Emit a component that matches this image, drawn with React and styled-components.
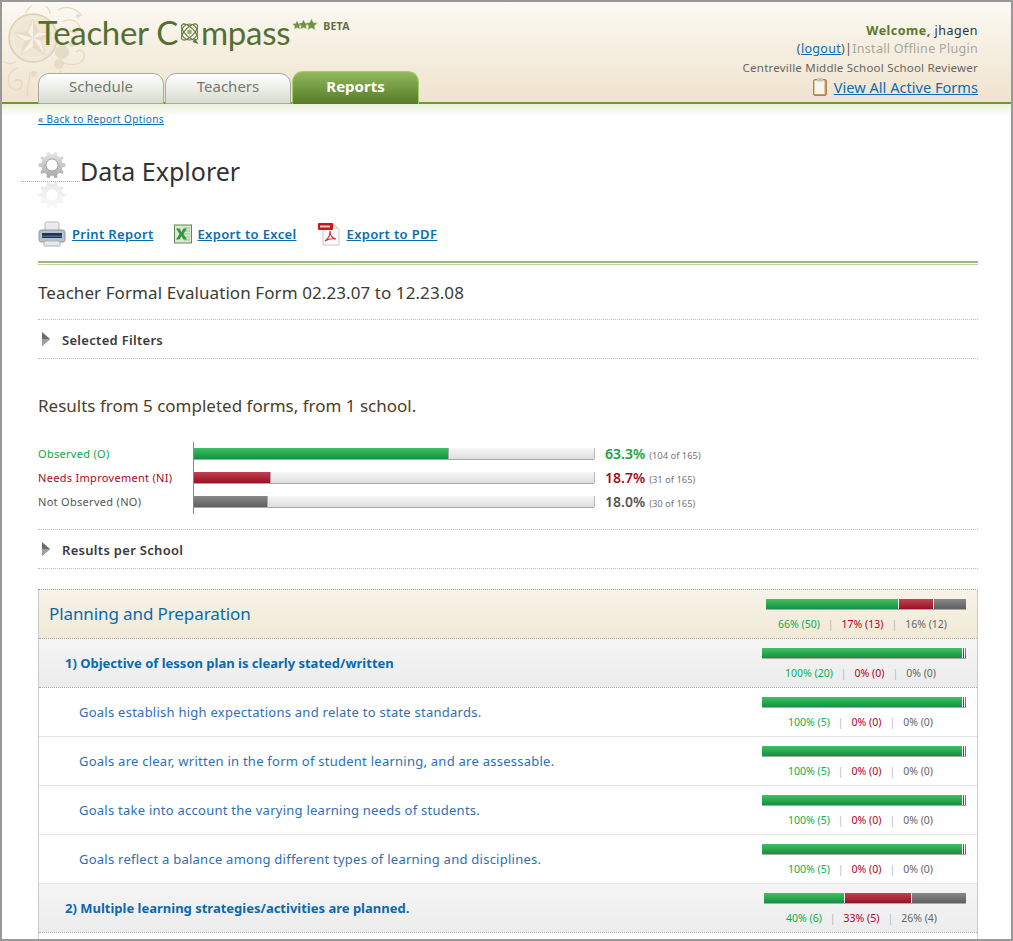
import React from 'react';
import styled, { createGlobalStyle } from 'styled-components';

const BODY_FONT = '"Noto Sans", "Open Sans", sans-serif';

const gearPath = (cx, cy, outer, inner, teeth) => {
  const pts = [];
  const step = (Math.PI * 2) / teeth;
  for (let i = 0; i < teeth; i++) {
    const a = i * step;
    [[-0.3, inner], [-0.17, outer], [0.17, outer], [0.3, inner]].forEach(([o, r]) => {
      const t = a + o * step;
      pts.push(`${(cx + r * Math.cos(t)).toFixed(2)} ${(cy + r * Math.sin(t)).toFixed(2)}`);
    });
  }
  return `M${pts.join('L')}Z`;
};

const Gear = ({ faded }) => (
  <svg width="30" height="30" viewBox="0 0 30 30" style={faded ? { transform: 'scaleY(-1)' } : undefined}>
    <defs>
      <linearGradient id={faded ? 'gf' : 'gs'} x1="0" y1="0" x2="0" y2="1">
        <stop offset="0" stopColor={faded ? '#fafafa' : '#e6e6e6'} />
        <stop offset="1" stopColor={faded ? '#e8e8e8' : '#a8a8a8'} />
      </linearGradient>
    </defs>
    <path d={gearPath(15, 15, 14.5, 11.5, 10)} fill={`url(#${faded ? 'gf' : 'gs'})`} />
    <circle cx="15" cy="15" r="6.5" fill="#fff" stroke={faded ? '#f2f2f2' : '#9a9a9a'} strokeWidth="1" />
  </svg>
);

const Star = ({ size }) => (
  <svg width={size} height={size} viewBox="0 0 20 20">
    <path d="M10 .8l2.800 6 6.600.8-4.800 4.500 1.200 6.500L10 15.400l-5.800 3.200 1.200-6.500L.6 7.600l6.600-.8z" fill="#6f9440" stroke="#e9efdc" strokeWidth=".8" />
  </svg>
);

const Emblem = () => (
  <svg width="100" height="100" viewBox="0 0 100 100">
    <g fill="none" stroke="#e4d9c1" strokeWidth="1.3">
      <path d="M56 8c10-6 20 0 24 6M60 20c8-4 16-2 18 6-2 6-8 6-10 2" />
      <path d="M60 60c8 4 18 4 22-4 2-6-4-10-8-6M58 68c2 8 0 18-10 22-8 2-14-4-10-10 4-4 8 0 6 4" />
      <path d="M16 66c-8 2-12 10-8 18 4 6 12 4 12-2 0-4-6-6-8-2M28 70c0 8-4 16-2 24" />
      <path d="M44 4c2 2 4 4 4 8M30 4c-4 2-6 6-6 8M2 60c4 2 8 2 12 0" />
    </g>
    <g fill="#e6dbc4">
      <circle cx="60" cy="50" r="7" />
      <circle cx="57" cy="62" r="5" />
      <circle cx="70" cy="42" r="3" />
      <circle cx="76" cy="14" r="2" />
      <circle cx="32" cy="72" r="3" />
    </g>
    <circle cx="31" cy="36" r="24" fill="#efe6d4" stroke="#dfd0b5" strokeWidth="1.5" />
    <circle cx="31" cy="36" r="20" fill="none" stroke="#f7f1e5" strokeWidth="1" />
    <path d="M31 17l5 13 14 1-11 8 4 14-12-8-12 8 4-14-11-8 14-1z" fill="#f8f3e8" stroke="#dfd0b5" strokeWidth=".6" />
    <path d="M31 17l5 13-5 6zM50 31l-11 8-8-3zM43 53l-12-8v-9zM19 53l4-14 8-3zM12 31l14-1 5 6z" fill="#e8dcc6" />
  </svg>
);

const CompassO = () => (
  <svg width="23" height="27" viewBox="0 0 23 27">
    <g fill="none" stroke="#5f7a3a" strokeWidth="1.1">
      <circle cx="11.5" cy="13" r="8" />
      <ellipse cx="11.5" cy="13" rx="10.5" ry="4.4" transform="rotate(45 11.5 13)" />
      <ellipse cx="11.5" cy="13" rx="10.5" ry="4.4" transform="rotate(-45 11.5 13)" />
    </g>
    <circle cx="11.5" cy="13" r="2.4" fill="#9aa888" />
    <path d="M17 19.500l3.500 5.500-6-2z" fill="#5f7a3a" />
  </svg>
);

const Clipboard = () => (
  <svg width="14" height="18" viewBox="0 0 14 18">
    <rect x=".5" y="1.500" width="13" height="16" rx="1.500" fill="#c79a5c" stroke="#a98450" />
    <rect x="1.500" y="2.500" width="10" height="13.500" fill="#f7f5ee" />
    <rect x="4" y="0" width="6" height="3.500" rx="1" fill="#c4c4bc" />
  </svg>
);

const PrinterIcon = () => (
  <svg width="28" height="26" viewBox="0 0 28 26">
    <rect x="7" y="1" width="14" height="10" rx="1.500" fill="#e8ecef" stroke="#b4bac0" />
    <rect x="1" y="9" width="26" height="12" rx="2.500" fill="#b9c0c7" stroke="#8f979f" />
    <rect x="4" y="12" width="20" height="5" fill="#1e3553" />
    <rect x="4" y="14.500" width="20" height="1.500" fill="#45688f" />
    <rect x="6" y="20" width="16" height="5" rx="1" fill="#e6e9ec" stroke="#a9b0b7" />
  </svg>
);

const ExcelIcon = () => (
  <svg width="18" height="20" viewBox="0 0 18 20">
    <rect x=".5" y="1" width="17" height="18" fill="#dce8d0" stroke="#5f8a58" />
    <path d="M10 4h6M10 7h6M10 10h6M10 13h6M10 16h6" stroke="#a9c09c" strokeWidth="1" />
    <path d="M2 4.500h3.600l1.900 3.400 1.900-3.400H13l-3.600 5.500 3.600 5.500H9.400l-1.900-3.400-1.900 3.400H2L5.600 10z" fill="#2c9a3e" />
  </svg>
);

const PdfIcon = () => (
  <svg width="24" height="24" viewBox="-1 0 24 24">
    <path d="M5 2h11l5 5v16H5z" fill="#fafafa" stroke="#c9c9c9" />
    <path d="M16 2v5h5z" fill="#dcdcdc" />
    <rect x="0" y="1" width="15" height="7" rx="1" fill="#c8161c" />
    <rect x="2" y="3.500" width="10" height="2" fill="#f3c6c6" />
    <path d="M7 19c3-2 5-6 5-10 0 4 2 7 6 8-4-.5-8 0-11 2z" fill="none" stroke="#d4262c" strokeWidth="1.100" />
  </svg>
);

const Arrow = () => (
  <svg width="10" height="16" viewBox="0 0 10 16">
    <path d="M1 1l8 7-8 7z" fill="#6b6b6b" />
    <path d="M1 8l8 0-8 7z" fill="#a0a0a0" />
  </svg>
);

const GlobalStyle = createGlobalStyle`
  html, body { margin: 0; padding: 0; background: #fff; }
  body { font-family: ${BODY_FONT}; }
  a { color: #0a6db3; }
`;

const Frame = styled.div`
  box-sizing: border-box;
  width: 1013px;
  height: 941px;
  overflow: hidden;
  border: 2px solid #999;
  background: #fff;
`;

const Header = styled.header`
  position: relative;
  box-sizing: border-box;
  height: 102px;
  display: flex;
  justify-content: space-between;
  padding: 0 33px 0 36px;
  background: linear-gradient(#fbf9f3, #efe3cd);
  border-bottom: 2px solid #6c9a2e;
`;

const EmblemWrap = styled.div`
  position: absolute;
  left: 0;
  top: 0;
  height: 100px;
`;

const Brand = styled.div`
  position: relative;
  display: flex;
  flex-direction: column;
  justify-content: space-between;
`;

const LogoRow = styled.div`
  display: flex;
  align-items: flex-start;
  padding-top: 10px;
`;

const LogoText = styled.div`
  display: flex;
  align-items: center;
  font-family: Lato, ${BODY_FONT};
  font-weight: 400;
  font-size: 33px;
  line-height: 40px;
  letter-spacing: -.3px;
  color: #556f31;
  white-space: nowrap;
`;

const StarRow = styled.div`
  display: flex;
  align-items: center;
  margin: 6px 0 0 2px;
  > * + * { margin-left: -4px; }
`;

const Beta = styled.span`
  margin: 7px 0 0 5px;
  font-size: 10.5px;
  font-weight: 700;
  letter-spacing: .3px;
  color: #636c45;
`;

const Tabs = styled.nav`
  display: flex;
  gap: 1px;
  align-items: flex-end;
  margin-bottom: -2px;
`;

const Tab = styled.a`
  box-sizing: border-box;
  width: ${p => (p.$active ? 127 : 126)}px;
  height: ${p => (p.$active ? 33 : 31)}px;
  display: flex;
  align-items: center;
  justify-content: center;
  padding-bottom: ${p => (p.$active ? 4 : 6)}px;
  border: 1px solid ${p => (p.$active ? '#a5cf63' : '#a9a9a4')};
  border-bottom-width: ${p => (p.$active ? 0 : 1)}px;
  border-radius: 11px 11px 0 0;
  background: ${p => (p.$active ? 'linear-gradient(#92b95b, #567a29)' : 'linear-gradient(#fff, #d6dccf)')};
  color: ${p => (p.$active ? '#fff' : '#77776f')};
  font-size: 15px;
  font-weight: ${p => (p.$active ? 700 : 400)};
`;

const Account = styled.div`
  display: flex;
  flex-direction: column;
  align-items: flex-end;
  padding-top: 20px;
  font-size: 12.5px;
  line-height: 18px;
  color: #666;
`;

const Welcome = styled.div`
  color: #333;
  letter-spacing: .5px;
  b { color: #607529; }
`;

const LogoutLine = styled.div`
  color: #a9a69e;
  letter-spacing: .3px;
  a { color: #0a6db3; }
  span { color: #555; }
`;

const SchoolLine = styled.div`
  font-size: 11.5px;
  line-height: 19px;
  letter-spacing: .22px;
`;

const FormsLink = styled.div`
  display: flex;
  align-items: center;
  gap: 7px;
  font-size: 14.6px;
  line-height: 20px;
`;

const Main = styled.main`
  padding: 0 33px 0 36px;
  background: linear-gradient(#e9f2dc, #fff) no-repeat 0 0 / 100% 13px;
`;

const BackLink = styled.a`
  display: block;
  padding-top: 8px;
  font-size: 10px;
  line-height: 14px;
  letter-spacing: .4px;
  color: #0a6db3;
  text-decoration: underline;
`;

const TitleRow = styled.div`
  position: relative;
  display: flex;
  gap: 15px;
  margin-top: 25px;
  height: 58px;
  &::before {
    content: '';
    position: absolute;
    left: -17px;
    top: 30px;
    width: 59px;
    border-top: 1px dotted #aaa;
  }
`;

const GearColumn = styled.div`
  display: flex;
  flex-direction: column;
  gap: 2px;
  width: 28px;
  margin-left: -1px;
`;

const Title = styled.h1`
  margin: 0;
  padding-top: 2px;
  font-size: 25px;
  line-height: 36px;
  font-weight: 400;
  color: #333;
`;

const Tools = styled.div`
  display: flex;
  align-items: center;
  gap: 20px;
  margin-top: 10px;
  height: 30px;
`;

const Tool = styled.a`
  display: flex;
  align-items: center;
  gap: 6px;
  font-size: 13px;
  font-weight: 600;
  letter-spacing: .35px;
  span { color: #0a6db3; text-decoration: underline; }
`;

const Rule = styled.div`
  margin-top: 12px;
  height: 1px;
  border-top: 2px solid #9db873;
  border-bottom: 1px solid #c3d2a8;
`;

const FormTitle = styled.h2`
  margin: 16px 0 0;
  font-size: 17px;
  line-height: 24px;
  font-weight: 400;
  letter-spacing: .08px;
  color: #3b3b33;
`;

const Toggle = styled.div`
  display: flex;
  align-items: center;
  gap: 11px;
  box-sizing: border-box;
  height: 40px;
  padding: 2px 0 0 3px;
  border-top: 1px dotted #bbb;
  border-bottom: 1px dotted #bbb;
  font-size: 13px;
  font-weight: 600;
  letter-spacing: .3px;
  color: #3a3a3a;
  svg { margin-top: -2px; }
`;

const FiltersToggle = styled(Toggle)`
  margin-top: 14px;
`;

const ResultsHeading = styled.h3`
  margin: 35px 0 0;
  font-size: 17px;
  line-height: 24px;
  font-weight: 400;
  color: #4a4028;
`;

const Chart = styled.div`
  display: grid;
  grid-template-columns: 155px 401px auto;
  margin-top: 24px;
  height: 72px;
  align-content: center;
`;

const ChartLabel = styled.div`
  height: 24px;
  line-height: 24px;
  font-size: 11px;
  letter-spacing: .3px;
  color: ${p => p.$color};
`;

const ChartTrack = styled.div`
  box-sizing: border-box;
  display: flex;
  align-items: center;
  height: 24px;
  padding-bottom: 2px;
  border-left: 1px solid #888;
`;

const Track = styled.div`
  width: 400px;
  height: 11px;
  display: flex;
  background: linear-gradient(#f6f6f6, #dedede);
  box-shadow: 0 1px 0 #a8a8a8, 1px 0 0 #bbb;
`;

const Fill = styled.div`
  width: ${p => p.$w}px;
  background: ${p => p.$bg};
  border-right: 1px solid #aaa;
`;

const ChartValue = styled.div`
  display: flex;
  align-items: baseline;
  gap: 4px;
  height: 24px;
  line-height: 24px;
  padding-left: 11px;
  font-size: 14px;
  font-weight: 600;
  color: ${p => p.$color};
  small {
    font-size: 9.4px;
    font-weight: 400;
    color: #777;
  }
`;

const ResultsToggle = styled(Toggle)`
  margin-top: 15px;
`;

const Table = styled.section`
  margin-top: 20px;
  padding-bottom: 20px;
  border-top: 1px dotted #999;
  border-left: 1px solid #ccc;
  border-right: 1px solid #ccc;
`;

const Row = styled.div`
  box-sizing: border-box;
  display: flex;
  align-items: center;
  justify-content: space-between;
  height: 49px;
  padding-right: 11px;
  padding-left: ${p => ({ section: 10, question: 26, goal: 40 }[p.$kind])}px;
  border-bottom: 1px ${p => (p.$kind === 'goal' ? 'solid #e4e4e4' : 'dotted #aaa')};
  background: ${p => ({
    section: 'linear-gradient(#f7f3e8, #f1e9d6)',
    question: 'linear-gradient(#f5f5f5, #ececec)',
    goal: '#fff',
  }[p.$kind])};
`;

const RowLabel = styled.div`
  padding-bottom: 1px;
  color: ${p => (p.$kind === 'goal' ? '#2d70b6' : '#0b69ab')};
  font-size: ${p => (p.$kind === 'section' ? 17 : 13)}px;
  font-weight: ${p => (p.$kind === 'question' ? 700 : 400)};
  letter-spacing: ${p => ({ section: -0.1, question: 0, goal: 0.25 }[p.$kind])}px;
`;

const Stat = styled.div`
  display: flex;
  flex-direction: column;
  align-items: flex-end;
  padding-top: 2px;
`;

const StatBar = styled.div`
  display: flex;
  gap: 1px;
  height: 10px;
  box-shadow: 0 1px 0 #aaa;
`;

const Seg = styled.div`
  width: ${p => p.$w}px;
  background: ${p => p.$bg};
`;

const StatText = styled.div`
  align-self: center;
  display: flex;
  gap: 8px;
  margin: 8px 7px 0 0;
  font-size: 10.5px;
  line-height: 14px;
  i { font-style: normal; color: #b9b9b9; }
`;

const Pct = styled.span`
  color: ${p => p.$color};
`;

const GREEN = 'linear-gradient(#3dc264, #178f40)';
const RED = 'linear-gradient(#c7404f, #931324)';
const GREY = 'linear-gradient(#888, #5f5f5f)';

const chartRows = [
  { label: 'Observed (O)', color: '#0aa83f', w: 254, bg: GREEN, pct: '63.3%', of: '(104 of 165)' },
  { label: 'Needs Improvement (NI)', color: '#a80a26', w: 76, bg: RED, pct: '18.7%', of: '(31 of 165)' },
  { label: 'Not Observed (NO)', color: '#555', w: 73, bg: GREY, pct: '18.0%', of: '(30 of 165)' },
];

const full = [200, 1, 1];
const fullText = n => [`100% (${n})`, '0% (0)', '0% (0)'];

const rows = [
  { kind: 'section', label: 'Planning and Preparation', segs: [132, 34, 32], text: ['66% (50)', '17% (13)', '16% (12)'] },
  { kind: 'question', label: '1) Objective of lesson plan is clearly stated/written', segs: full, text: fullText(20) },
  { kind: 'goal', label: 'Goals establish high expectations and relate to state standards.', segs: full, text: fullText(5) },
  { kind: 'goal', label: 'Goals are clear, written in the form of student learning, and are assessable.', segs: full, text: fullText(5) },
  { kind: 'goal', label: 'Goals take into account the varying learning needs of students.', segs: full, text: fullText(5) },
  { kind: 'goal', label: 'Goals reflect a balance among different types of learning and disciplines.', segs: full, text: fullText(5) },
  { kind: 'question', label: '2) Multiple learning strategies/activities are planned.', segs: [80, 66, 54], text: ['40% (6)', '33% (5)', '26% (4)'] },
];

const segColors = [GREEN, RED, GREY];
const textColors = ['#0aaf4c', '#b5002a', '#666'];

const App = () => (
  <Frame>
    <GlobalStyle />
    <Header>
      <EmblemWrap><Emblem /></EmblemWrap>
      <Brand>
        <LogoRow>
          <LogoText>Teacher C<CompassO />mpass</LogoText>
          <StarRow>
            <Star size={10} />
            <Star size={11} />
            <Star size={13} />
          </StarRow>
          <Beta>BETA</Beta>
        </LogoRow>
        <Tabs>
          <Tab>Schedule</Tab>
          <Tab>Teachers</Tab>
          <Tab $active>Reports</Tab>
        </Tabs>
      </Brand>
      <Account>
        <Welcome><b>Welcome,</b> jhagen</Welcome>
        <LogoutLine><span>(</span><a href="#logout">logout</a><span>)|</span>Install Offline Plugin</LogoutLine>
        <SchoolLine>Centreville Middle School School Reviewer</SchoolLine>
        <FormsLink><Clipboard /><a href="#forms">View All Active Forms</a></FormsLink>
      </Account>
    </Header>
    <Main>
      <BackLink href="#back">« Back to Report Options</BackLink>
      <TitleRow>
        <GearColumn>
          <Gear />
          <Gear faded />
        </GearColumn>
        <Title>Data Explorer</Title>
      </TitleRow>
      <Tools>
        <Tool><PrinterIcon /><span>Print Report</span></Tool>
        <Tool><ExcelIcon /><span>Export to Excel</span></Tool>
        <Tool><PdfIcon /><span>Export to PDF</span></Tool>
      </Tools>
      <Rule />
      <FormTitle>Teacher Formal Evaluation Form 02.23.07 to 12.23.08</FormTitle>
      <FiltersToggle><Arrow />Selected Filters</FiltersToggle>
      <ResultsHeading>Results from 5 completed forms, from 1 school.</ResultsHeading>
      <Chart>
        {chartRows.map(r => (
          <React.Fragment key={r.label}>
            <ChartLabel $color={r.color}>{r.label}</ChartLabel>
            <ChartTrack>
              <Track><Fill $w={r.w} $bg={r.bg} /></Track>
            </ChartTrack>
            <ChartValue $color={r.color}>{r.pct}<small>{r.of}</small></ChartValue>
          </React.Fragment>
        ))}
      </Chart>
      <ResultsToggle><Arrow />Results per School</ResultsToggle>
      <Table>
        {rows.map(r => (
          <Row key={r.label} $kind={r.kind}>
            <RowLabel $kind={r.kind}>{r.label}</RowLabel>
            <Stat>
              <StatBar>
                {r.segs.map((w, i) => <Seg key={i} $w={w} $bg={segColors[i]} />)}
              </StatBar>
              <StatText>
                {r.text.map((t, i) => (
                  <React.Fragment key={i}>
                    {i > 0 && <i>|</i>}
                    <Pct $color={textColors[i]}>{t}</Pct>
                  </React.Fragment>
                ))}
              </StatText>
            </Stat>
          </Row>
        ))}
      </Table>
    </Main>
  </Frame>
);

export default App;
